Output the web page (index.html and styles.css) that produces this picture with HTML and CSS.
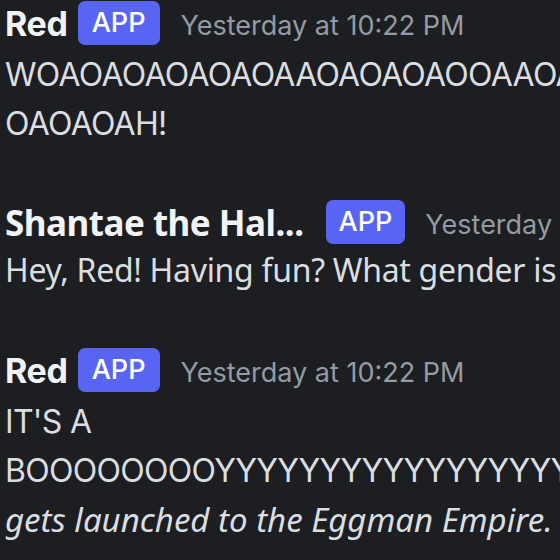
FILE: index.html
```html
<!DOCTYPE html>
<html lang="en">
<head>
  <meta charset="UTF-8">
  <title>Messages</title>
  <link rel="stylesheet" href="styles.css">
</head>
<body>
  <main class="chat">
    <!-- Red, first post -->
    <div class="message">
      <div class="message-header">
        <span class="username">Red</span>
        <span class="app-tag">APP</span>
        <span class="timestamp">Yesterday at 10:22 PM</span>
      </div>
      <div class="message-body">
        <div class="line">WOAOAOAOAOAOAAOAOAOAOOAAOAOAOAOAOA</div>
        <div class="line">OAOAOAH!</div>
      </div>
    </div>

    <!-- Shantae -->
    <div class="message noto">
      <div class="message-header">
        <span class="username">Shantae the Hal...</span>
        <span class="app-tag">APP</span>
        <span class="timestamp">Yesterday at 10:22 PM</span>
      </div>
      <div class="message-body">
        <div class="line">Hey, Red! Having fun? What gender is it?</div>
      </div>
    </div>

    <!-- Red, second post -->
    <div class="message">
      <div class="message-header">
        <span class="username">Red</span>
        <span class="app-tag">APP</span>
        <span class="timestamp">Yesterday at 10:22 PM</span>
      </div>
      <div class="message-body">
        <div class="line">IT'S A</div>
        <div class="line">BOOOOOOOOYYYYYYYYYYYYYYYYYYYYYYYY!</div>
        <div class="line action">gets launched to the Eggman Empire.</div>
      </div>
    </div>
  </main>
</body>
</html>
```

FILE: styles.css
```css
html, body {
  margin: 0;
  padding: 0;
  background-color: #1d1e22;
  overflow: hidden;
}
body {
  font-family: Inter, "Noto Sans", sans-serif;
  color: #dbdee1;
}
.chat {
  padding: 0 0 0 5px;
  width: 1200px;
}
.message {
  margin-bottom: 51px;
}
.message-header {
  display: flex;
  align-items: center;
  height: 46px;
  margin-bottom: 4px;
  white-space: nowrap;
}
.username {
  font-size: 34px;
  font-weight: 700;
  color: #f2f3f5;
  letter-spacing: -0.3px;
}
.app-tag {
  background-color: #5865f2;
  color: #fff;
  font-size: 27px;
  font-weight: 500;
  height: 44px;
  line-height: 44px;
  padding: 0 14px;
  border-radius: 7px;
  margin-left: 10px;
}
.timestamp {
  font-size: 27px;
  color: #949ba4;
  margin-left: 21px;
  margin-top: 4px;
}
.message-body {
  font-size: 32px;
  line-height: 49px;
  letter-spacing: -0.7px;
}
.line {
  white-space: nowrap;
}
.noto .username {
  font-family: "Noto Sans", sans-serif;
  font-size: 35px;
  letter-spacing: -0.5px;
}
.noto .app-tag {
  margin-left: 22px;
  padding: 0 13px;
}
.noto .timestamp {
  margin-left: 20px;
}
.noto .message-header {
  margin-bottom: 0;
}
.noto .message-body {
  font-family: "Noto Sans", sans-serif;
  font-size: 32px;
  letter-spacing: -0.3px;
}
.noto.message {
  margin-bottom: 53px;
}
.action {
  font-family: "Noto Sans", sans-serif;
  font-style: italic;
  font-size: 33px;
  letter-spacing: 0;
}
```
